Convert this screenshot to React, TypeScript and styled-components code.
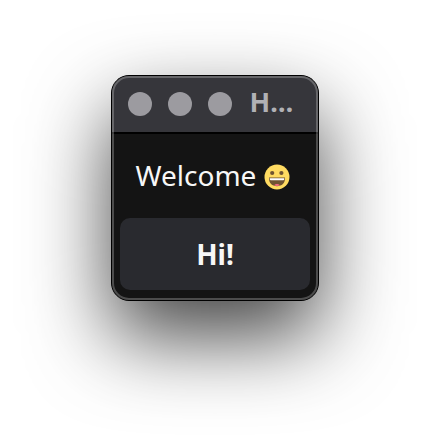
import React from "react";
import styled, { createGlobalStyle } from "styled-components";

const GlobalStyle = createGlobalStyle`
  *, *::before, *::after { box-sizing: border-box; }
  body {
    margin: 0;
    background: #fff;
    font-family: "Noto Sans", "Open Sans", sans-serif;
  }
`;

const Desktop = styled.div`
  display: flex;
  flex-direction: column;
  align-items: center;
  min-height: 100vh;
  padding: 75px 24px 0;
  overflow: hidden;
`;

const Window = styled.main`
  position: relative;
  display: flex;
  flex-direction: column;
  border: 1px solid #000;
  border-radius: 18px;
  background: #141414;
  box-shadow: 0 36px 82px rgba(0, 0, 0, 0.73);

  &::after {
    content: "";
    position: absolute;
    inset: 0;
    border: 2px solid rgba(255, 255, 255, 0.24);
    border-radius: 17px;
    pointer-events: none;
  }
`;

const TitleBar = styled.header`
  display: flex;
  align-items: center;
  height: 58px;
  padding: 0 16px 4px;
  border-bottom: 2px solid #000;
  border-radius: 17px 17px 0 0;
  background: #36363b;
`;

const Controls = styled.div`
  display: flex;
  gap: 16px;
  margin: 4px 18px 0 0;
`;

const ControlButton = styled.button`
  width: 24px;
  height: 24px;
  padding: 0;
  border: 0;
  border-radius: 50%;
  background: #9c9ba0;
`;

const Title = styled.h1`
  margin: 0;
  color: #b1b1b5;
  font-size: 27px;
  line-height: 36px;
  font-weight: 700;
`;

const Content = styled.section`
  display: flex;
  flex-direction: column;
  padding: 0 8px 10px;
`;

const Message = styled.p`
  display: flex;
  align-items: flex-start;
  justify-content: center;
  gap: 8px;
  height: 84px;
  margin: 0;
  padding: 21px 20px 0 16px;
  color: #f7f7f7;
  font-size: 28px;
  line-height: 40px;
`;

const Emoji = styled.svg`
  width: 26px;
  height: 26px;
  margin-top: 9px;
  flex: none;
`;

const HiButton = styled.button`
  height: 72px;
  padding: 0 16px;
  border: 0;
  border-radius: 10px;
  background: #292a2f;
  color: #f7f7f7;
  font-family: inherit;
  font-size: 28px;
  line-height: 40px;
  font-weight: 700;
`;

function GrinningFace() {
  return (
    <Emoji viewBox="0 0 26 26" role="img" aria-label="Grinning face">
      <circle cx="13" cy="13" r="12.5" fill="#ffdb61" />
      <circle cx="8.2" cy="9" r="2.1" fill="#705431" />
      <circle cx="17.4" cy="9" r="2.1" fill="#705431" />
      <path d="M5 13.500h16c.4 5.500-3.200 8.700-8 8.700s-8.400-3.200-8-8.700Z" fill="#705431" />
      <path d="M5.700 14.200h14.600v.9q0 1.200-1.200 1.200H6.900q-1.200 0-1.200-1.200Z" fill="#fff" />
      <path d="M10 21.300q3-2.800 6 0-3 1.200-6 0Z" fill="#f76c82" />
    </Emoji>
  );
}

const controls = ["Close", "Minimize", "Maximize"];

export default function App() {
  return (
    <>
      <GlobalStyle />
      <Desktop>
        <Window>
          <TitleBar>
            <Controls>
              {controls.map((name) => (
                <ControlButton key={name} type="button" aria-label={name} />
              ))}
            </Controls>
            <Title>H…</Title>
          </TitleBar>
          <Content>
            <Message>
              Welcome <GrinningFace />
            </Message>
            <HiButton type="button">Hi!</HiButton>
          </Content>
        </Window>
      </Desktop>
    </>
  );
}
